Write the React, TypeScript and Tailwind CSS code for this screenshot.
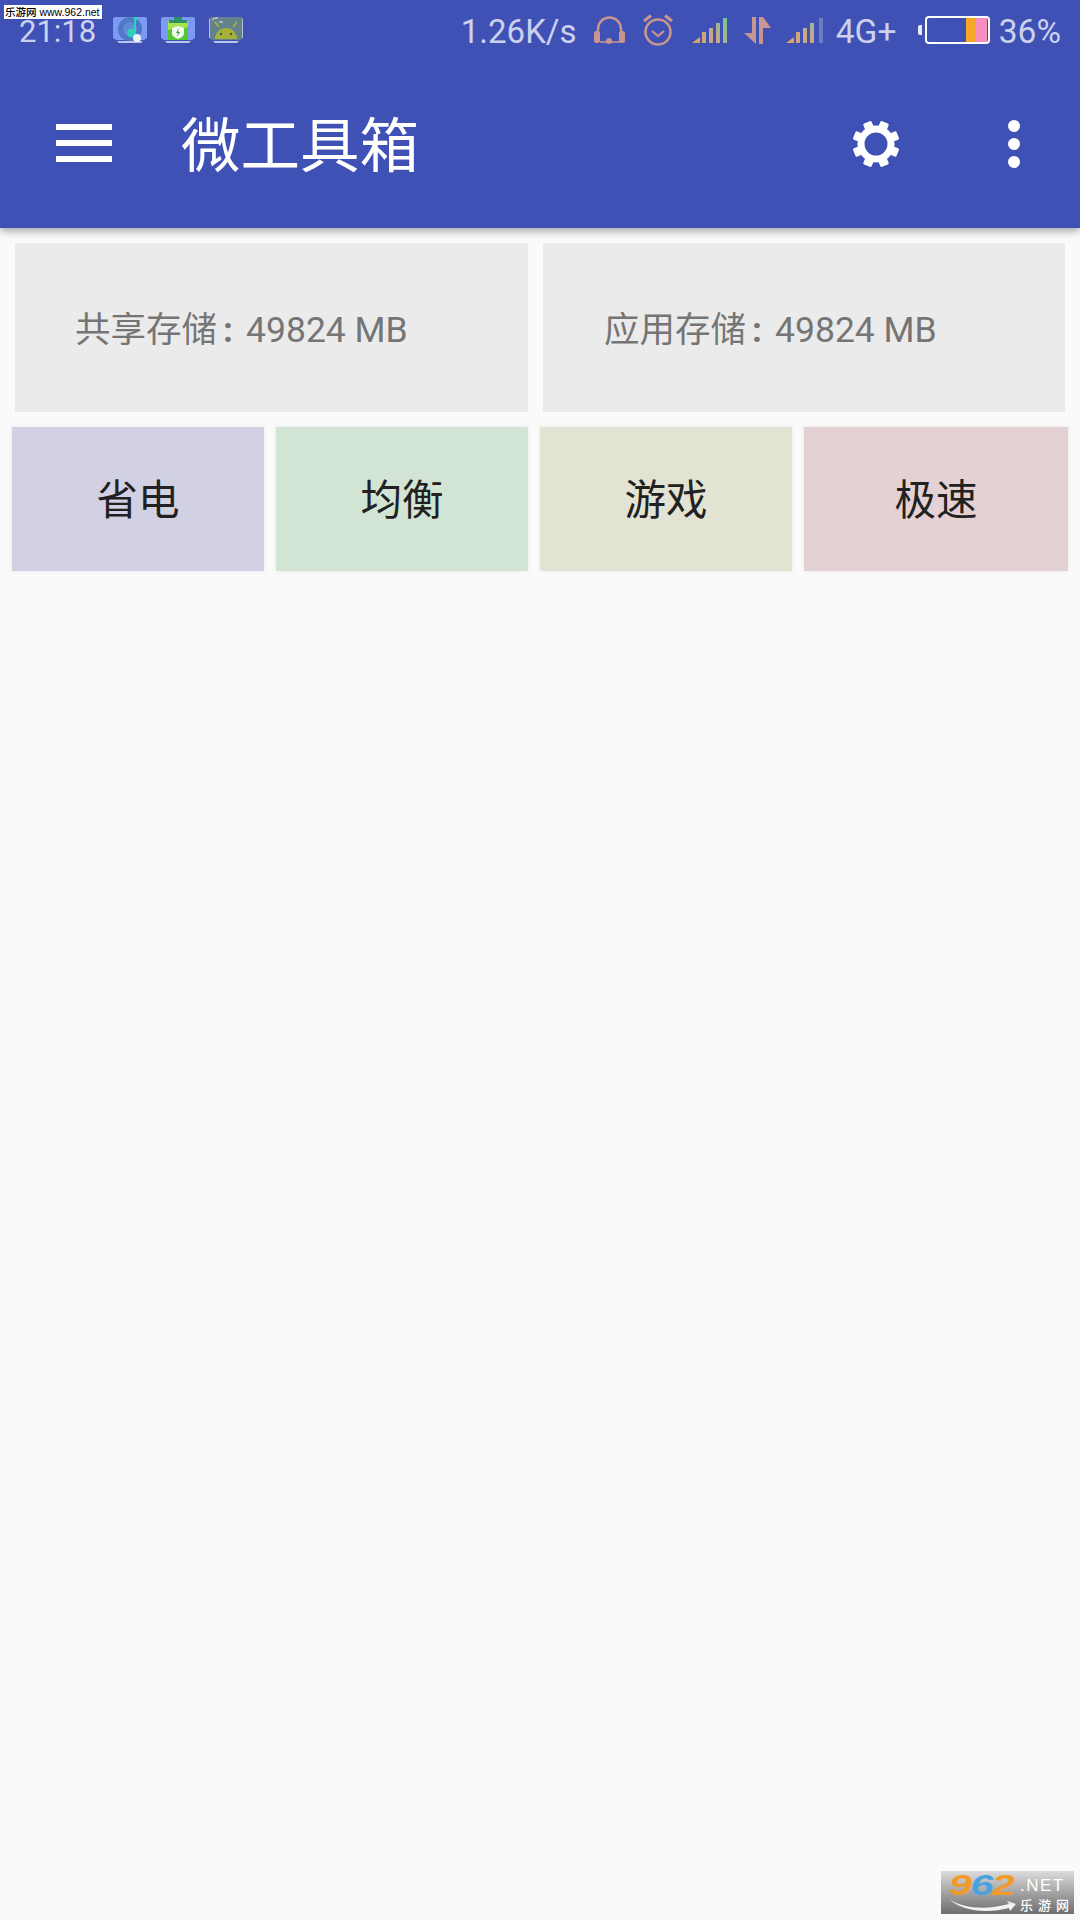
import { useId } from "react"

const tiles = [
  { label: "省电", bg: "bg-[#d2d1e3]", width: "w-[252px]" },
  { label: "均衡", bg: "bg-[#d2e4d3]", width: "w-[252px]" },
  { label: "游戏", bg: "bg-[#e2e3d2]", width: "w-[252px]" },
  { label: "极速", bg: "bg-[#e3d1d3]", width: "w-[264px]" },
]

function TrayFrame({ color, children }: { color: string; children: React.ReactNode }) {
  return (
    <svg width="34" height="26" viewBox="0 0 34 26" className="shrink-0">
      <path d="M2 0h30a2 2 0 0 1 2 2v19l-3 2H3l-3-2V2a2 2 0 0 1 2-2z" fill={color} />
      <path d="M4 24h26l-2 2H6z" fill="#b9c4ea" />
      {children}
    </svg>
  )
}

function MusicTray() {
  return (
    <TrayFrame color="#7d9af2">
      <circle cx="17" cy="12" r="12" fill="#4f78c8" />
      <circle cx="17" cy="12" r="7" fill="#5f8ad8" />
      <path d="M21 0h3.5v3H23v13a4.5 4.5 0 1 1-2-3.7z" fill="#2fd0b8" />
      <circle cx="24" cy="21" r="4" fill="#eef1fa" />
    </TrayFrame>
  )
}

function CleanerTray() {
  return (
    <TrayFrame color="#7d9af2">
      <path d="M7 4h20v19H7z" fill="#54c92f" />
      <path d="M7 4h20v6c-6 3-13 0-20 3z" fill="#a7e34a" />
      <path d="M13 0h8v3h5v3H8V3h5z" fill="#2f8f68" />
      <path d="M17 9l6 2v5c0 3-3 5-6 6-3-1-6-3-6-6v-5z" fill="#f4faf2" />
      <path d="M18 11l-3 5h2l-1 4 3-5h-2z" fill="#3c9e3a" />
    </TrayFrame>
  )
}

function AndroidTray() {
  return (
    <TrayFrame color="#64828c">
      <path d="M3 3l3-2h3M10 5h4" stroke="#e6ecef" strokeWidth="1" fill="none" />
      <path d="M6 23a11 11 0 0 1 22 0z" fill="#a4b13c" transform="translate(0 -1)" />
      <path d="M10 10L6 5M24 10l4-5" stroke="#a4b13c" strokeWidth="2" />
      <circle cx="12" cy="17" r="1.2" fill="#4d5a2c" />
      <circle cx="22" cy="17" r="1.2" fill="#4d5a2c" />
      <path d="M0 2v19M34 2v19" stroke="#d8e0e4" strokeWidth="1.4" />
    </TrayFrame>
  )
}

function Headset() {
  return (
    <svg width="31" height="28" viewBox="0 0 31 28" fill="none" className="shrink-0">
      <path d="M4 18V13a11.5 11.5 0 0 1 23 0v5" stroke="#c9958f" strokeWidth="2.4" />
      <rect x="0" y="15" width="6" height="12" rx="2.5" fill="#c9958f" />
      <rect x="25" y="15" width="6" height="12" rx="2.5" fill="#c9958f" />
      <path d="M6 26h20" stroke="#c9958f" strokeWidth="1.6" />
      <circle cx="15" cy="25" r="3" fill="#c9958f" />
    </svg>
  )
}

function AlarmClock() {
  return (
    <svg width="32" height="32" viewBox="0 0 32 32" fill="none" className="shrink-0">
      <circle cx="16" cy="18" r="12.5" stroke="#c9958f" strokeWidth="2.6" />
      <path d="M10 17l6 5 6-5" stroke="#c9958f" strokeWidth="2.2" />
      <path d="M2 7l7-5.5M30 7l-7-5.5" stroke="#c9958f" strokeWidth="3" />
    </svg>
  )
}

function Signal({ dim }: { dim?: boolean }) {
  const id = useId()
  return (
    <svg width="37" height="25" viewBox="0 0 37 25" className="shrink-0">
      <defs>
        <linearGradient id={id} gradientUnits="userSpaceOnUse" x1="0" y1="25" x2="34" y2="2">
          <stop offset="0" stopColor="#dba45c" />
          <stop offset="0.55" stopColor="#c9a88c" />
          <stop offset="1" stopColor="#76c68a" />
        </linearGradient>
      </defs>
      <path d="M0 25l8-6v6z" fill={`url(#${id})`} />
      <rect x="10" y="14" width="4" height="11" fill={`url(#${id})`} />
      <rect x="17" y="10" width="4" height="15" fill={`url(#${id})`} />
      <rect x="24" y="5" width="4" height="20" fill={`url(#${id})`} />
      {dim ? (
        <rect x="33" y="0" width="4" height="25" fill="#6a7fc0" />
      ) : (
        <rect x="31" y="0" width="4" height="25" fill={`url(#${id})`} />
      )}
    </svg>
  )
}

function DataArrows() {
  return (
    <svg width="27" height="27" viewBox="0 0 27 27" className="shrink-0">
      <path d="M8 0h4v27L0 16h8z" fill="#c9958f" />
      <path d="M15 27h4V11h8L19 0h-4z" fill="#c9958f" />
    </svg>
  )
}

function Battery() {
  return (
    <div className="flex items-center shrink-0">
      <div className="w-[4px] h-[10px] bg-[#e8eaf6] rounded-l-[2px] mr-[3px]" />
      <div className="w-[65px] h-[28px] rounded-[4px] border-2 border-white flex justify-end pr-[1px]">
        <div className="w-[10px] bg-[#f9a825]" />
        <div className="w-[11px] bg-[#f48fc0]" />
      </div>
    </div>
  )
}

function Gear() {
  const angles = [22.5, 67.5, 112.5, 157.5, 202.5, 247.5, 292.5, 337.5]
  return (
    <svg width="48" height="48" viewBox="0 0 48 48" className="shrink-0">
      <circle cx="24" cy="24" r="15" fill="none" stroke="#ffffff" strokeWidth="7" />
      {angles.map((a) => (
        <rect key={a} x="19.5" y="0.5" width="9" height="9" rx="1.5" fill="#ffffff" transform={`rotate(${a} 24 24)`} />
      ))}
    </svg>
  )
}

function Stat({ name, width, pad }: { name: string; width: string; pad: string }) {
  return (
    <div className={`${width} ${pad} h-[169px] pt-[6px] bg-[#ebebeb] flex items-center text-[35.5px] text-[#757575]`}>
      <span className="whitespace-nowrap">
        {name}
        <span className="ml-[6px] mr-[13px] font-bold">:</span>
        49824 MB
      </span>
    </div>
  )
}

export default function App() {
  return (
    <div className="relative w-[1080px] h-[1920px] overflow-hidden bg-[#fafafa] font-['Roboto','Noto_Sans_CJK_SC',sans-serif]">
      <header className="bg-[#3f51b5] h-[228px] flex flex-col shadow-[0_3px_8px_rgba(0,0,0,0.35)]">
        <div className="h-[60px] flex items-center pl-[19px] text-[33.5px] text-[#ccd2ee]">
          <span className="w-[94px] pt-[4px] text-[31px]">21:18</span>
          <div className="flex items-center gap-[14px]">
            <MusicTray />
            <CleanerTray />
            <AndroidTray />
          </div>
          <div className="ml-auto pr-[19px] flex items-center">
            <span className="w-[133px] pt-[4px] text-[33px]">1.26K/s</span>
            <Headset />
            <span className="w-[17px]" />
            <AlarmClock />
            <span className="w-[18px]" />
            <Signal />
            <span className="w-[15px]" />
            <DataArrows />
            <span className="w-[15px]" />
            <Signal dim />
            <span className="w-[13px]" />
            <span className="w-[82px] pt-[4px]">4G+</span>
            <Battery />
            <span className="ml-[9px] pt-[4px]">36%</span>
          </div>
        </div>
        <div className="flex-1 flex items-center pl-[56px] pr-[60px]">
          <div className="w-[56px] mb-[2px] flex flex-col gap-[10px]">
            <div className="h-[6px] bg-white" />
            <div className="h-[6px] bg-white" />
            <div className="h-[6px] bg-white" />
          </div>
          <h1 className="ml-[69px] pt-[7px] text-[59.5px] leading-none text-white font-normal whitespace-nowrap">微工具箱</h1>
          <div className="ml-auto flex items-center gap-[108px]">
            <Gear />
            <div className="flex flex-col gap-[6px]">
              <div className="w-[12px] h-[12px] rounded-full bg-white" />
              <div className="w-[12px] h-[12px] rounded-full bg-white" />
              <div className="w-[12px] h-[12px] rounded-full bg-white" />
            </div>
          </div>
        </div>
      </header>

      <main className="flex flex-col">
        <div className="flex gap-[15px] ml-[15px] mt-[15px]">
          <Stat name="共享存储" width="w-[513px]" pad="pl-[60px]" />
          <Stat name="应用存储" width="w-[522px]" pad="pl-[61px]" />
        </div>
        <div className="flex gap-[12px] ml-[12px] mt-[15px]">
          {tiles.map((t) => (
            <div
              key={t.label}
              className={`${t.width} ${t.bg} h-[144px] pt-[4px] flex items-center justify-center text-[41.5px] text-[#212121] shadow-[0_0_4px_rgba(0,0,0,0.08)]`}
            >
              {t.label}
            </div>
          ))}
        </div>
      </main>

      <div className="absolute left-[4px] top-[5px] w-[98px] h-[14px] bg-white flex items-center pl-[1px] text-[10.5px] leading-none text-black font-medium whitespace-nowrap font-['Liberation_Sans','Noto_Sans_CJK_SC',sans-serif]">
        乐游网 www.962.net
      </div>

      <div className="absolute left-[941px] top-[1871px] w-[133px] h-[43px] flex bg-gradient-to-b from-[#dcdcdc] via-[#a4a4a4] to-[#6e6e6e] font-['Liberation_Sans','Noto_Sans_CJK_SC',sans-serif]">
        <div className="w-[78px] pl-[8px] pt-[2px] h-[26px] text-[29px] leading-[24px] font-bold italic tracking-[-1px] whitespace-nowrap">
          <div className="origin-left scale-x-[1.42] w-fit">
            <span className="text-[#f29a26]">9</span>
            <span className="text-[#4aa3e0]">6</span>
            <span className="text-[#f29a26]">2</span>
          </div>
        </div>
        <div className="flex-1 flex flex-col pl-[1px] text-white">
          <span className="mt-[6px] text-[17px] leading-[18px] tracking-[1.5px] whitespace-nowrap">.NET</span>
          <span className="mt-[4px] text-[13px] leading-[14px] font-medium tracking-[5px] whitespace-nowrap">乐游网</span>
        </div>
        <svg width="70" height="14" viewBox="0 0 70 14" className="absolute left-[7px] bottom-[1px]">
          <path d="M1 0c14 10 38 11 60 5l-2-3 9 3-6 7-1-3C38 15 14 12 1 0z" fill="#f2f2f2" />
        </svg>
      </div>
    </div>
  )
}
